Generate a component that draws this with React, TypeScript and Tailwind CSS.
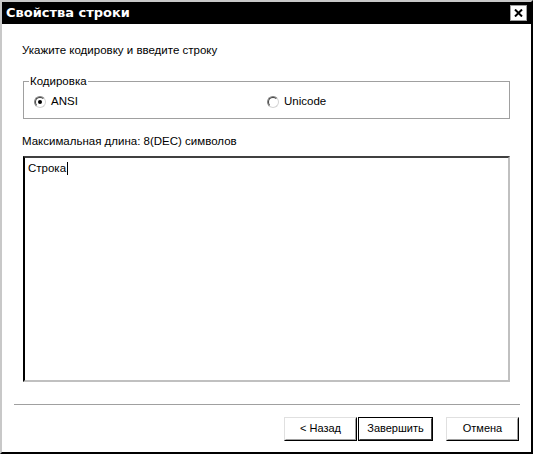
import React from "react";

const font = { fontFamily: "'Liberation Sans', Arial, sans-serif" };

function Radio({ checked, label }: { checked?: boolean; label: string }) {
  return (
    <div className="flex items-center gap-[5px]">
      <span className="relative w-[12px] h-[12px] rounded-full border border-t-[#808080] border-l-[#808080] border-b-[#d4d4d4] border-r-[#d4d4d4] bg-white flex items-center justify-center">
        <span className="absolute inset-0 rounded-full border border-t-[#404040] border-l-[#404040] border-b-transparent border-r-transparent" />
        {checked && <span className="w-[4px] h-[4px] rounded-full bg-black" />}
      </span>
      <span>{label}</span>
    </div>
  );
}

function Button({ label, isDefault }: { label: string; isDefault?: boolean }) {
  return (
    <button
      type="button"
      className={
        "h-[24px] bg-white text-black text-[11px] flex items-center justify-center " +
        (isDefault
          ? "w-[75px] border border-black"
          : "w-[73px] border border-t-[#e0e0e0] border-l-[#e0e0e0] border-b-black border-r-black")
      }
    >
      <span
        className={
          "w-full h-full flex items-center justify-center border " +
          (isDefault
            ? "border-t-white border-l-white border-b-[#404040] border-r-[#404040]"
            : "border-t-white border-l-white border-b-[#a0a0a0] border-r-[#a0a0a0]")
        }
      >
        {label}
      </span>
    </button>
  );
}

export default function App() {
  return (
    <div
      className="w-[533px] h-[454px] bg-white border-t-2 border-l-2 border-t-[#c8c8c8] border-l-[#c8c8c8] border-r-2 border-b-2 border-r-black border-b-black flex flex-col text-[11.5px] text-black"
      style={font}
    >
      <div className="h-[22px] bg-black flex items-center justify-between pl-[4px] pr-[4px]">
        <span
          className="text-white font-bold text-[13px]"
          style={{ fontFamily: "'DejaVu Sans', 'Liberation Sans', sans-serif" }}
        >
          Свойства строки
        </span>
        <span className="w-[17px] h-[16px] bg-white border border-[#a0a0a0] flex items-center justify-center">
          <svg width="9" height="8" viewBox="0 0 9 8">
            <path d="M1 0.5 L8 7.5 M8 0.5 L1 7.5" stroke="black" strokeWidth="2" />
          </svg>
        </span>
      </div>

      <div className="flex-1 flex flex-col">
        <div className="pl-[20px] pt-[18px]">Укажите кодировку и введите строку</div>

        <div className="relative ml-[21px] mr-[21px] mt-[22px] h-[38px] border border-[#a0a0a0]">
          <span className="absolute -top-[8px] left-[5px] bg-white px-[1px] leading-[14px]">Кодировка</span>
          <div className="flex items-center h-full pt-[3px] pl-[10px]">
            <div className="w-[233px]">
              <Radio checked label="ANSI" />
            </div>
            <Radio label="Unicode" />
          </div>
        </div>

        <div className="pl-[20px] pt-[14px]">Максимальная длина: 8(DEC) символов</div>

        <div className="ml-[21px] mt-[5px] w-[487px] h-[226px] border-2 border-t-[#404040] border-l-black border-b-[#c0c0c0] border-r-[#c0c0c0] px-[3px] py-[2px]">
          <span>Строка</span>
          <span className="inline-block w-[1px] h-[13px] bg-black align-middle ml-[1px]" />
        </div>

        <div className="ml-[12px] mr-[11px] mt-[22px] border-t border-t-[#a0a0a0] border-b border-b-white" />

        <div className="flex justify-end pr-[12px] mt-[11px]">
          <Button label="< Назад" />
          <div className="ml-[1px]">
            <Button label="Завершить" isDefault />
          </div>
          <div className="ml-[13px]">
            <Button label="Отмена" />
          </div>
        </div>
      </div>
    </div>
  );
}
